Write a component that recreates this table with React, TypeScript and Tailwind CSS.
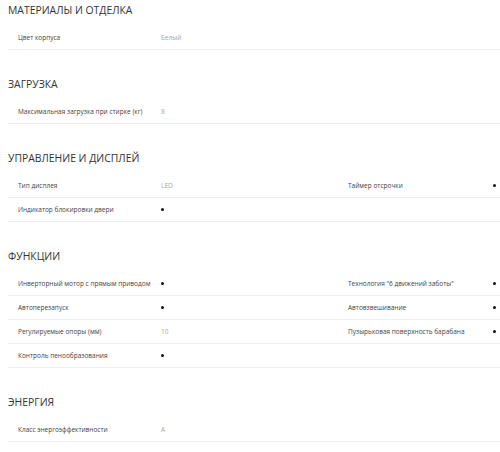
type Cell = { label: string; value: string };
type Row = [Cell, Cell?];

const sections: { title: string; rows: Row[] }[] = [
  {
    title: "Материалы и отделка",
    rows: [[{ label: "Цвет корпуса", value: "Белый" }]],
  },
  {
    title: "Загрузка",
    rows: [[{ label: "Максимальная загрузка при стирке (кг)", value: "8" }]],
  },
  {
    title: "Управление и дисплей",
    rows: [
      [
        { label: "Тип дисплея", value: "LED" },
        { label: "Таймер отсрочки", value: "dot" },
      ],
      [{ label: "Индикатор блокировки двери", value: "dot" }],
    ],
  },
  {
    title: "Функции",
    rows: [
      [
        { label: "Инверторный мотор с прямым приводом", value: "dot" },
        { label: "Технология \"6 движений заботы\"", value: "dot" },
      ],
      [
        { label: "Автоперезапуск", value: "dot" },
        { label: "Автовзвешивание", value: "dot" },
      ],
      [
        { label: "Регулируемые опоры (мм)", value: "10" },
        { label: "Пузырьковая поверхность барабана", value: "dot" },
      ],
      [{ label: "Контроль пенообразования", value: "dot" }],
    ],
  },
  {
    title: "Энергия",
    rows: [[{ label: "Класс энергоэффективности", value: "A" }]],
  },
];

function Value({ value }: { value: string }) {
  if (value === "dot") {
    return <span className="block w-[3px] h-[3px] rounded-full bg-[#111]" />;
  }
  return <span className="text-[#a6a6a6]">{value}</span>;
}

export default function App() {
  return (
    <div
      className="bg-white w-[500px] h-[452px] overflow-hidden pt-[3px] pl-[8px]"
      style={{ fontFamily: '"Open Sans", sans-serif' }}
    >
      {sections.map((s, i) => (
        <section key={s.title} className={i > 0 ? "mt-[27px]" : ""}>
          <h2 className="text-[10.4px] leading-[15px] uppercase text-[#333] mb-[8px] whitespace-nowrap">
            {s.title}
          </h2>
          {s.rows.map((r, j) => (
            <div
              key={j}
              className="flex items-center h-[24px] border-b border-[#eeeeee] text-[6.5px] text-[#444] whitespace-nowrap"
            >
              <div className="w-[153px] pl-[10px]">{r[0].label}</div>
              <div className="w-[187px] flex items-center">
                <Value value={r[0].value} />
              </div>
              {r[1] && (
                <>
                  <div className="w-[145px]">{r[1].label}</div>
                  <div className="flex items-center">
                    <Value value={r[1].value} />
                  </div>
                </>
              )}
            </div>
          ))}
        </section>
      ))}
    </div>
  );
}
